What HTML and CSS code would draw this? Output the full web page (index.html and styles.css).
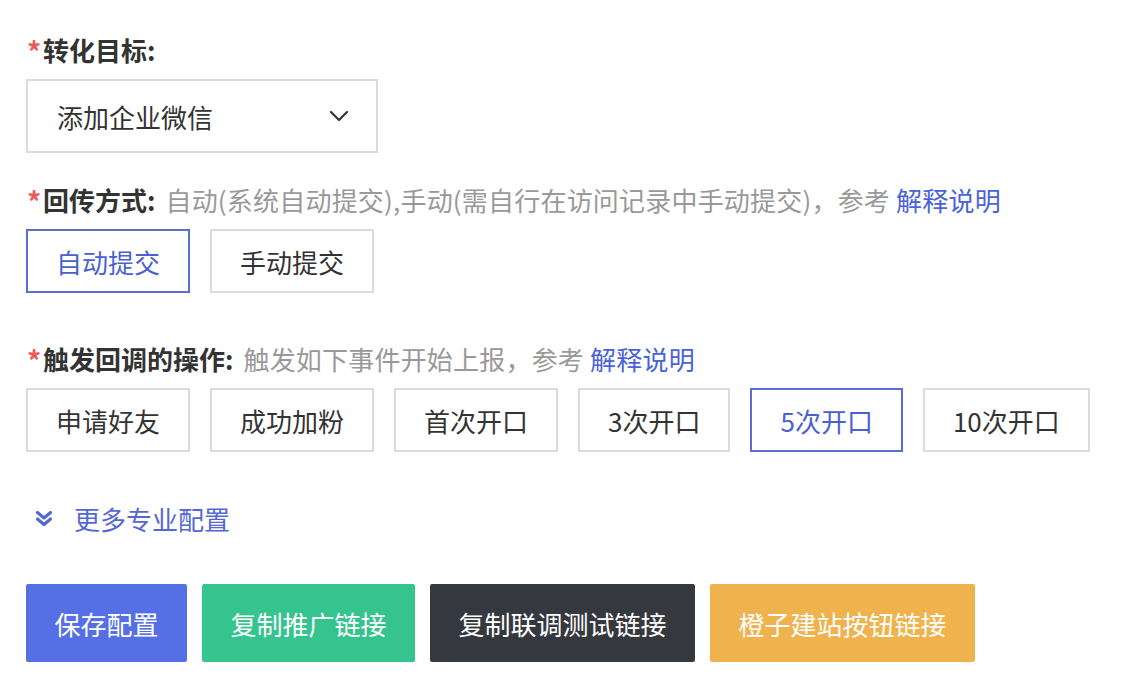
FILE: index.html
```html
<!DOCTYPE html>
<html lang="zh-CN">
<head>
<meta charset="utf-8">
<link rel="stylesheet" href="styles.css">
</head>
<body>
<div class="form">
  <div class="item item-select">
    <div class="label"><span class="req">*</span><span class="name">转化目标:</span></div>
    <div class="select">
      <span class="select-text">添加企业微信</span>
      <svg class="chev" width="20" height="12" viewBox="0 0 20 12"><path d="M2 2 L10 10 L18 2" fill="none" stroke="#333" stroke-width="2.2" stroke-linecap="round" stroke-linejoin="round"/></svg>
    </div>
  </div>

  <div class="item">
    <div class="label"><span class="req">*</span><span class="name">回传方式:</span><span class="hint">自动(系统自动提交),手动(需自行在访问记录中手动提交)，参考 <a class="link">解释说明</a></span></div>
    <div class="options">
      <span class="opt active">自动提交</span>
      <span class="opt">手动提交</span>
    </div>
  </div>

  <div class="item">
    <div class="label"><span class="req">*</span><span class="name">触发回调的操作:</span><span class="hint">触发如下事件开始上报，参考 <a class="link">解释说明</a></span></div>
    <div class="options">
      <span class="opt">申请好友</span>
      <span class="opt">成功加粉</span>
      <span class="opt">首次开口</span>
      <span class="opt">3次开口</span>
      <span class="opt active">5次开口</span>
      <span class="opt">10次开口</span>
    </div>
  </div>

  <div class="more">
    <svg class="dchev" width="18" height="17" viewBox="0 0 18 17"><path d="M2.5 2.5 L9 8 L15.5 2.5 M2.5 9 L9 14.5 L15.5 9" fill="none" stroke="#5468d4" stroke-width="3.2" stroke-linecap="round" stroke-linejoin="round"/></svg>
    <span>更多专业配置</span>
  </div>

  <div class="actions">
    <span class="btn btn-blue">保存配置</span>
    <span class="btn btn-green">复制推广链接</span>
    <span class="btn btn-dark">复制联调测试链接</span>
    <span class="btn btn-orange">橙子建站按钮链接</span>
  </div>
</div>
</body>
</html>
```

FILE: styles.css
```css
* { box-sizing: border-box; }
html, body { margin: 0; padding: 0; background: #fff; }
body {
  font-family: "PingFang SC", "Noto Sans CJK SC", "Noto Sans", sans-serif;
  font-size: 26px;
  color: #333;
}
.form {
  padding: 32px 26px 0 26px;
}
.item { margin-bottom: 48px; }
.item-select { margin-bottom: 29px; }
.label {
  height: 36px;
  line-height: 36px;
  white-space: nowrap;
  margin-bottom: 11px;
  display: flex;
  align-items: center;
}
.req {
  color: #ef5a5f;
  font-size: 28px;
  font-weight: bold;
  width: 17px;
  line-height: 36px;
  align-self: flex-start;
  position: relative;
  top: 1px;
  left: 1px;
}
.name {
  font-weight: bold;
  color: #333;
  margin-right: 10px;
}
.hint {
  color: #999;
  letter-spacing: 0.2px;
}
.link {
  color: #4a62d8;
  text-decoration: none;
}
.select {
  width: 352px;
  height: 74px;
  border: 2px solid #dcdcdc;
  display: flex;
  align-items: center;
  justify-content: space-between;
  padding: 0 27px 0 29px;
  color: #333;
}
.chev { display: block; }
.options {
  display: flex;
  gap: 20px;
}
.opt {
  display: flex;
  align-items: center;
  justify-content: center;
  height: 64px;
  padding: 0 28px 0 28px;
  border: 2px solid #dcdcdc;
  color: #333;
  white-space: nowrap;
}
.opt.active {
  border-color: #5b6ed4;
  color: #4a5fd2;
}
.more {
  display: flex;
  align-items: center;
  height: 36px;
  padding-left: 9px;
  color: #5468d4;
  margin-bottom: 48px;
}
.dchev { display: block; margin-right: 21px; }
.actions {
  display: flex;
  gap: 15px;
}
.btn {
  display: flex;
  align-items: center;
  justify-content: center;
  height: 78px;
  padding: 0 28.5px;
  color: #fff;
  border-radius: 2px;
  white-space: nowrap;
}
.btn-blue { background: #5570e4; }
.btn-green { background: #35c38e; }
.btn-dark { background: #35383e; }
.btn-orange { background: #f0b24c; }
```
